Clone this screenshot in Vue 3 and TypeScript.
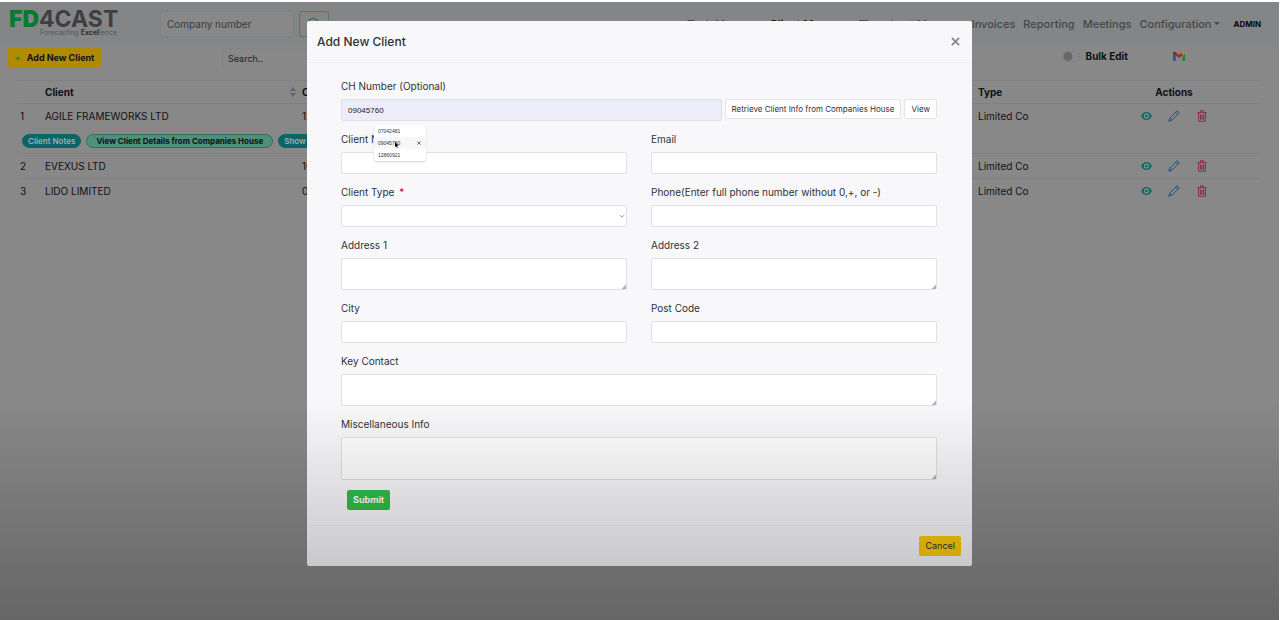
<script setup lang="ts">
import { ref } from 'vue'

interface NavItem {
  label: string
  active?: boolean
  caret?: boolean
}
interface Client {
  id: number
  name: string
  ch: string
  type: string
  open?: boolean
}

const nav: NavItem[] = [
  { label: 'Task Manager' },
  { label: 'Client Manager', active: true },
  { label: 'Timesheet Manager' },
  { label: 'Invoices' },
  { label: 'Reporting' },
  { label: 'Meetings' },
  { label: 'Configuration', caret: true },
]
const clients: Client[] = [
  { id: 1, name: 'AGILE FRAMEWORKS LTD', ch: '12860921', type: 'Limited Co', open: true },
  { id: 2, name: 'EVEXUS LTD', ch: '10042481', type: 'Limited Co' },
  { id: 3, name: 'LIDO LIMITED', ch: '09045760', type: 'Limited Co' },
]
const suggestions = ['07042481', '09045760', '12860921']
const chNumber = ref('09045760')
const bulkEdit = ref(false)
</script>

<template>
  <div class="page">
    <header class="topbar">
      <a class="logo" href="#">
        <span class="brand"><b>FD</b>4CAST</span>
        <span class="tagline">Forecasting <b>Excel</b>lence</span>
      </a>
      <input class="company" type="text" placeholder="Company number" aria-label="Company number" />
      <button class="find" type="button" aria-label="Find company">
        <svg viewBox="0 0 16 16" width="14" height="14"><circle cx="7" cy="7" r="5.5" /><path d="M11 11l4 4" /></svg>
      </button>
      <nav class="nav">
        <a v-for="item in nav" :key="item.label" href="#" :class="{ active: item.active }">{{ item.label }}<i v-if="item.caret" class="caret"></i></a>
        <a class="admin" href="#">ADMIN</a>
      </nav>
    </header>

    <main>
      <div class="tools">
        <button class="btn add" type="button"><span class="plus">+</span>Add New Client</button>
        <input class="search" type="text" placeholder="Search.." aria-label="Search" />
        <label class="bulk"><input v-model="bulkEdit" type="checkbox" />Bulk Edit</label>
        <a class="gmail" href="#" aria-label="Gmail">
          <svg viewBox="0 0 24 18" width="12" height="9">
            <path fill="#2458a0" d="M0 3v13.4C0 17.3.7 18 1.6 18h3.9V7z" />
            <path fill="#1b8a42" d="M24 3v13.4c0 .9-.7 1.600-1.600 1.600h-3.900V7z" />
            <path fill="#a52a22" d="M5.500 7V.8L12 5.700 18.500.8V7L12 12z" />
            <path fill="#7c1a16" d="M0 3C0 .3 3 -1 5 .5l.5.4V7L0 3z" />
            <path fill="#b89000" d="M24 3c0-2.700-3-4-5-2.500l-.5.4V7L24 3z" />
          </svg>
        </a>
      </div>

      <table class="clients">
        <colgroup><col class="c-id" /><col class="c-name" /><col /><col class="c-type" /><col class="c-act" /></colgroup>
        <thead>
          <tr>
            <th></th>
            <th><span class="sortable">Client<svg viewBox="0 0 6 10" width="6" height="10"><path d="M3 0l3 4H0zM3 10L0 6h6z" /></svg></span></th>
            <th>CH Number</th>
            <th>Type</th>
            <th class="mid">Actions</th>
          </tr>
        </thead>
        <tbody v-for="c in clients" :key="c.id">
          <tr>
            <td>{{ c.id }}</td>
            <td>{{ c.name }}</td>
            <td>{{ c.ch }}</td>
            <td>{{ c.type }}</td>
            <td>
              <div class="actions">
                <button type="button" aria-label="View client">
                  <svg class="eye" viewBox="0 0 16 12" width="11" height="8"><path fill-rule="evenodd" d="M8 0c4 0 7 3 8 6-1 3-4 6-8 6S1 9 0 6c1-3 4-6 8-6zm0 2a4 4 0 100 8 4 4 0 000-8zm0 2a2 2 0 110 4 2 2 0 010-4z" /></svg>
                </button>
                <button type="button" aria-label="Edit client">
                  <svg class="pen" viewBox="0 0 16 16" width="12" height="12"><path d="M12.300 1l2.700 2.700L5 13.700 1 15l1.300-4zM10.300 3l2.700 2.700M2.300 11L5 13.700" /></svg>
                </button>
                <button type="button" aria-label="Delete client">
                  <svg class="bin" viewBox="0 0 16 16" width="12" height="12"><path d="M2 3.500h12M6 3V1h4v2M3.500 4v11h9V4M6 6v7M8 6v7M10 6v7" /></svg>
                </button>
              </div>
            </td>
          </tr>
          <tr v-if="c.open" class="extra">
            <td colspan="5">
              <div class="badges">
                <button type="button">Client Notes</button>
                <button type="button" class="mint">View Client Details from Companies House</button>
                <button type="button">Show Tasks</button>
              </div>
            </td>
          </tr>
        </tbody>
      </table>
    </main>

    <div class="backdrop">
      <section class="modal" role="dialog" aria-labelledby="modal-title">
        <header class="modal-head">
          <h2 id="modal-title">Add New Client</h2>
          <button type="button" aria-label="Close">
            <svg viewBox="0 0 10 10" width="9" height="9"><path d="M1 1l8 8M9 1L1 9" /></svg>
          </button>
        </header>
        <form class="modal-body" @submit.prevent>
          <div class="field wide">
            <label for="ch">CH Number (Optional)</label>
            <div class="ch-row">
              <div class="ch-box">
                <input id="ch" v-model="chNumber" type="text" />
                <div class="suggest">
                  <ul>
                    <li v-for="(s, i) in suggestions" :key="s" :class="{ hover: i === 1 }">
                      {{ s }}<svg v-if="i === 1" class="drop" viewBox="0 0 10 10" width="4" height="4"><path d="M1 1l8 8M9 1L1 9" /></svg>
                    </li>
                  </ul>
                  <svg class="pointer" viewBox="0 0 8 12" width="4" height="6"><path d="M0 0v10l2.300-2 1.700 4 1.600-.7L4 7.500h3.500z" /></svg>
                </div>
              </div>
              <button type="button" class="btn plain">Retrieve Client Info from Companies House</button>
              <button type="button" class="btn plain">View</button>
            </div>
          </div>
          <div class="field"><label for="name">Client Name</label><input id="name" type="text" /></div>
          <div class="field"><label for="email">Email</label><input id="email" type="text" /></div>
          <div class="field">
            <label for="type">Client Type <span class="req">*</span></label>
            <div class="select">
              <select id="type"><option></option></select>
              <svg viewBox="0 0 8 6" width="6" height="5"><path d="M1 1l3 3 3-3" /></svg>
            </div>
          </div>
          <div class="field"><label for="phone">Phone(Enter full phone number without 0,+, or -)</label><input id="phone" type="text" /></div>
          <div class="field"><label for="a1">Address 1</label><textarea id="a1"></textarea></div>
          <div class="field"><label for="a2">Address 2</label><textarea id="a2"></textarea></div>
          <div class="field"><label for="city">City</label><input id="city" type="text" /></div>
          <div class="field"><label for="post">Post Code</label><input id="post" type="text" /></div>
          <div class="field wide"><label for="key">Key Contact</label><textarea id="key"></textarea></div>
          <div class="field wide"><label for="misc">Miscellaneous Info</label><textarea id="misc" class="tall"></textarea></div>
          <div class="submit-row wide"><button type="submit" class="btn submit">Submit</button></div>
        </form>
        <footer class="modal-foot"><button type="button" class="btn cancel">Cancel</button></footer>
      </section>
    </div>
    <div class="shade"></div>
  </div>
</template>

<style>
body {
  margin: 0;
  background: #fff;
}
</style>

<style scoped>
* {
  box-sizing: border-box;
}
.page {
  position: relative;
  min-height: calc(100vh - 2px);
  margin: 2px 4px 0 0;
  background: #888889;
  color: #101112;
  font: 10px/16px Inter, "Liberation Sans", sans-serif;
  overflow: hidden;
}
button,
input,
select,
textarea {
  font: inherit;
  color: inherit;
  margin: 0;
}
button {
  padding: 0;
  border: 0;
  background: none;
}
a {
  color: inherit;
  text-decoration: none;
}
svg {
  display: block;
}
.topbar {
  display: flex;
  align-items: center;
  height: 44px;
  padding: 0 18px 0 9px;
  background: #848586;
}
.logo {
  display: flex;
  flex-direction: column;
  width: 108px;
  margin-right: 43px;
  color: #3d3f41;
}
.brand {
  font-size: 23px;
  line-height: 18px;
  font-weight: 700;
}
.brand b {
  color: #067a2d;
}
.tagline {
  align-self: flex-end;
  font-size: 7px;
  line-height: 10px;
  color: #55585a;
}
.tagline b {
  color: #303234;
}
.company {
  width: 134px;
  height: 26px;
  padding: 0 6px;
  border: 1px solid #7d7f81;
  border-radius: 3px;
  background: #888889;
}
.company::placeholder {
  color: #3a3d40;
  opacity: 1;
}
.find {
  display: grid;
  place-items: center;
  width: 30px;
  height: 26px;
  margin-left: 5px;
  border: 1px solid #4d8058;
  border-radius: 3px;
}
.find svg {
  fill: none;
  stroke: #2c7a3c;
  stroke-width: 1.500;
}
.nav {
  display: flex;
  align-items: center;
  gap: 8px;
  margin-left: auto;
  font-size: 11px;
  font-weight: 500;
  color: #45484a;
}
.nav .active {
  color: #08090a;
  font-weight: 600;
}
.nav .admin {
  margin-left: 5px;
  font-size: 8px;
  font-weight: 700;
  color: #08090a;
}
.caret {
  display: inline-block;
  margin-left: 3px;
  vertical-align: 3px;
  border: 3px solid transparent;
  border-top-color: #45484a;
  border-bottom: 0;
}
.tools {
  display: flex;
  align-items: flex-start;
  height: 20px;
  margin-top: 2px;
  padding: 0 94px 0 8px;
}
.btn {
  height: 20px;
  padding: 0 6px;
  border-radius: 2px;
  font-size: 9px;
  line-height: 18px;
  white-space: nowrap;
}
.add {
  width: 93px;
  padding: 0;
  background: #b08a05;
  font-weight: 700;
}
.plus {
  margin-right: 6px;
  color: #3f7d12;
}
.search {
  width: 150px;
  height: 20px;
  margin-left: 121px;
  padding: 0 5px;
  border: 1px solid #828385;
  border-radius: 3px;
  background: #888889;
  font-size: 9px;
}
.search::placeholder {
  color: #222426;
  opacity: 1;
}
.bulk {
  display: flex;
  align-items: center;
  gap: 6px;
  margin-left: auto;
  font-weight: 700;
}
.bulk input {
  appearance: none;
  width: 18px;
  height: 11px;
  border: 1px solid #7b7d7f;
  border-radius: 6px;
  background: radial-gradient(circle at 5px 50%, #66686a 4px, transparent 5px);
}
.gmail {
  margin-top: 4px;
  margin-left: 45px;
}
.clients {
  width: calc(100% - 35px);
  margin: 12px 18px 0 17px;
  table-layout: fixed;
  border-collapse: collapse;
}
.c-id {
  width: 25px;
}
.c-name {
  width: 257px;
}
.c-type {
  width: 112px;
}
.c-act {
  width: 174px;
}
.clients th,
.clients td {
  height: 25px;
  padding: 0 3px;
  text-align: left;
  white-space: nowrap;
}
.clients th {
  height: 23px;
  border-top: 1px solid #808183;
  font-weight: 700;
}
.clients th.mid {
  text-align: center;
}
.clients td {
  border-top: 1px solid #7f8082;
}
.clients .extra td {
  border: 0;
}
.sortable {
  display: flex;
  align-items: center;
  justify-content: space-between;
}
.sortable svg {
  fill: #646567;
}
.actions {
  display: flex;
  align-items: center;
  justify-content: center;
  gap: 16px;
}
.eye {
  fill: #0a6b64;
}
.pen,
.bin {
  fill: none;
  stroke-width: 1.300;
}
.pen {
  stroke: #254f8a;
}
.bin {
  stroke: #8c2743;
}
.badges {
  display: flex;
  gap: 5px;
  padding-left: 2px;
}
.badges button {
  height: 14px;
  padding: 0 5px;
  border: 1px solid #0d6668;
  border-radius: 7px;
  background: #0b6568;
  color: #a3adb0;
  font-size: 8px;
  line-height: 12px;
  font-weight: 600;
}
.badges .mint {
  padding: 0 9px;
  border-color: #34705c;
  background: #4f8f7b;
  color: #0d1412;
  font-weight: 700;
}
.backdrop {
  position: absolute;
  inset: 0;
  display: flex;
  align-items: flex-start;
  justify-content: center;
  padding-top: 19px;
}
.modal {
  width: 665px;
  border-radius: 2px;
  background: #f8f8fb;
  color: #2f3135;
}
.modal-head {
  display: flex;
  align-items: center;
  justify-content: space-between;
  height: 42px;
  padding: 0 12px 0 10px;
  border-bottom: 1px solid #eeeef1;
}
.modal-head h2 {
  margin: 0;
  font-size: 12px;
  font-weight: 500;
}
.modal-head svg {
  fill: none;
  stroke: #86888c;
  stroke-width: 2;
}
.modal-body {
  display: grid;
  grid-template-columns: 1fr 1fr;
  gap: 10px 24px;
  padding: 15px 35px 15px 34px;
}
.wide {
  grid-column: 1 / -1;
}
.field {
  display: flex;
  flex-direction: column;
  gap: 4px;
}
.field label {
  line-height: 17px;
}
.field input,
.field select,
.field textarea {
  display: block;
  width: 100%;
  height: 22px;
  padding: 0 6px;
  border: 1px solid #e0e0e5;
  border-radius: 2px;
  background: #fff;
}
.field textarea {
  height: 32px;
  resize: vertical;
}
.field textarea.tall {
  height: 43px;
}
.field textarea::-webkit-resizer {
  background: linear-gradient(135deg, transparent 50%, #b4b5ba 50%) right bottom / 4px 4px no-repeat;
}
.req {
  margin-left: 2px;
  color: #d0021b;
}
.select {
  position: relative;
}
.select select {
  appearance: none;
}
.select svg {
  position: absolute;
  right: 2px;
  top: 9px;
  fill: none;
  stroke: #6d6f73;
}
.ch-row {
  display: flex;
  gap: 3px;
}
.ch-box {
  position: relative;
  flex: 1;
}
.ch-box input {
  background: #ececfb;
  font-family: "Liberation Sans", sans-serif;
  font-size: 8px;
  color: #1b1c20;
}
.suggest {
  position: absolute;
  left: 33px;
  top: 26px;
  width: 52px;
  border-radius: 2px;
  background: #fff;
  box-shadow: 0 1px 2px rgba(0, 0, 0, 0.18);
  font-family: "Liberation Sans", sans-serif;
  font-size: 5px;
  line-height: 12px;
}
.suggest ul {
  margin: 0;
  padding: 0;
  list-style: none;
}
.suggest li {
  display: flex;
  align-items: center;
  justify-content: space-between;
  padding: 0 5px 0 4px;
}
.suggest .hover {
  background: #f7f7f9;
}
.drop {
  fill: none;
  stroke: #4b4d51;
  stroke-width: 2;
}
.pointer {
  position: absolute;
  left: 21px;
  top: 17px;
}
.plain {
  border: 1px solid #e4e4e9;
  background: #fff;
  font-size: 8px;
}
.submit-row {
  padding-left: 6px;
}
.submit {
  display: block;
  background: #2fbd49;
  color: #fff;
  font-weight: 700;
}
.modal-foot {
  display: flex;
  align-items: center;
  justify-content: flex-end;
  height: 41px;
  padding: 0 11px;
  border-top: 1px solid #eeeef1;
}
.cancel {
  background: #ffcb08;
}
.shade {
  position: absolute;
  left: 0;
  right: 0;
  bottom: 0;
  height: 220px;
  background: linear-gradient(transparent, rgba(0, 0, 0, 0.25));
  pointer-events: none;
}
</style>
